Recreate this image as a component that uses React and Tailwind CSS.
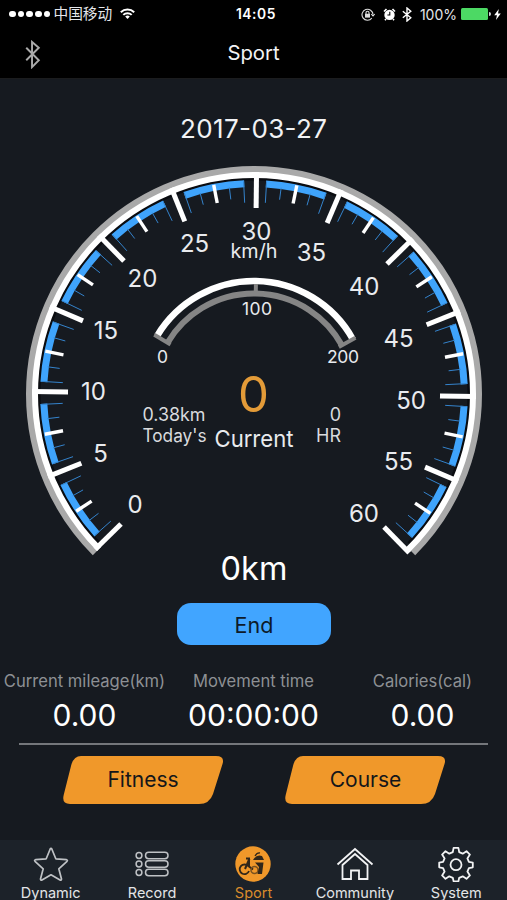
const CX = 254;
const CY = 315;
const TILT = 0.65;

// angle in degrees, clockwise from twelve o'clock
const polar = (r, deg) => {
  const a = ((deg - 90) * Math.PI) / 180;
  return [CX + r * Math.cos(a), CY + r * Math.sin(a)];
};

const arc = (r, from, to) => {
  const [x1, y1] = polar(r, from);
  const [x2, y2] = polar(r, to);
  return `M${x1} ${y1}A${r} ${r} 0 ${to - from > 180 ? 1 : 0} 1 ${x2} ${y2}`;
};

const ray = (r1, r2, deg) => {
  const [x1, y1] = polar(r1, deg);
  const [x2, y2] = polar(r2, deg);
  return `M${x1} ${y1}L${x2} ${y2}`;
};

const speedLabels = [
  { value: '0', x: 135, y: 434 },
  { value: '5', x: 100.5, y: 382.5 },
  { value: '10', x: 93.5, y: 321 },
  { value: '15', x: 106, y: 259.5 },
  { value: '20', x: 142.5, y: 207.5 },
  { value: '25', x: 194.5, y: 173 },
  { value: '30', x: 256.5, y: 161 },
  { value: '35', x: 311.5, y: 181.5 },
  { value: '40', x: 364, y: 216 },
  { value: '45', x: 398.5, y: 268 },
  { value: '50', x: 411, y: 329.5 },
  { value: '55', x: 398.5, y: 391 },
  { value: '60', x: 364, y: 443 },
];

const stats = [
  { label: 'Current mileage(km)', value: '0.00' },
  { label: 'Movement time', value: '00:00:00' },
  { label: 'Calories(cal)', value: '0.00' },
];

function StatusBar() {
  return (
    <div className="flex h-7 items-center justify-between pl-[9px] pr-[6px] text-white">
      <div className="flex w-[160px] items-center">
        <div className="flex gap-[2px]">
          {[0, 1, 2, 3, 4].map((dot) => (
            <span key={dot} className="h-[6.7px] w-[6.7px] rounded-full bg-white" />
          ))}
        </div>
        <span className="ml-[3px] text-[14.7px] leading-none text-gray-200">中国移动</span>
        <svg className="ml-[8px] h-[11px] w-[15px]" viewBox="0 0 15 11" fill="none" stroke="#fff" strokeWidth="2">
          <path d="M.8 4.3a9.6 9.6 0 0 1 13.4 0M3.3 6.9a6 6 0 0 1 8.4 0" />
          <path d="M5.2 8.6a3.3 3.3 0 0 1 4.6 0L7.5 11z" fill="#fff" stroke="none" />
        </svg>
      </div>
      <span className="pl-[2px] text-[13.8px] font-semibold tracking-[0.6px]">14:05</span>
      <div className="flex w-[160px] items-center justify-end">
        <svg className="h-[13px] w-[14px]" viewBox="0 0 14 13" fill="none" stroke="#ddd" strokeWidth="1.1">
          <path d="M10.8 10.2A5.5 5.5 0 1 1 12 6.5M10.2 6l1.8 2 1.7-2" />
          <rect x="4" y="5.8" width="5" height="3.8" fill="#ddd" stroke="none" />
          <path d="M5 6V4.8a1.5 1.5 0 0 1 3 0V6" />
        </svg>
        <svg className="ml-[8px] h-[13px] w-[13px]" viewBox="0 0 13 13">
          <circle cx="6.5" cy="6.9" r="5.2" fill="#fff" />
          <path d="M1 3.5L3.5 1M12 3.5L9.5 1M3 11l-1 1.3M10 11l1 1.3" stroke="#fff" strokeWidth="1.6" />
          <path d="M6.8 3.8V7H4.4" fill="none" stroke="#000" strokeWidth="1.1" />
        </svg>
        <svg className="ml-[6px] h-[15px] w-[10px]" viewBox="0 0 10 15" fill="none" stroke="#fff" strokeWidth="1.4">
          <path d="M.8 4.2l8 6.6L5 14V1l3.8 3.2-8 6.6" />
        </svg>
        <span className="ml-[8px] whitespace-nowrap text-[14px] text-gray-200">100%</span>
        <span className="ml-[4px] h-[12px] w-[27px] shrink-0 rounded-[1.5px] bg-[#4cd964]" />
        <span className="ml-px h-[4px] w-[2px] shrink-0 rounded-r bg-gray-300" />
        <svg className="ml-[3px] h-[11px] w-[7px] shrink-0" viewBox="0 0 6 10" fill="#fff">
          <path d="M4.2 0L0 5.6h2.5L1.6 10 6 4.2H3.5z" />
        </svg>
      </div>
    </div>
  );
}

function Gauge() {
  const majors = Array.from({ length: 13 }, (_, i) => -135 + i * 22.5 + TILT);
  const steps = majors.slice(0, 12);

  return (
    <svg className="block h-[481px] w-[507px]" viewBox="0 0 507 481" fill="none">
      <path d={arc(215, -134, 134)} stroke="#0a0c10" strokeWidth="3" />
      <path d={arc(224.5, -135, 135)} stroke="#a9a9a9" strokeWidth="7" />
      <path d={arc(219, -135, 135.5)} stroke="#fff" strokeWidth="6" />

      {steps.map((deg) => (
        <g key={deg}>
          <path d={arc(210.4, deg + 2.6, deg + 19.2)} stroke="#3fa4fc" strokeWidth="7" />
          <path d={ray(213, 191.5, deg + 2.75)} stroke="#3483cc" strokeWidth="1" />
          <path d={ray(208, 196, deg + 6.85)} stroke="#3483cc" strokeWidth="1" />
          <path d={ray(213, 194.5, deg + 10.95)} stroke="#fff" strokeWidth="3.4" />
          <path d={ray(208, 196, deg + 15.05)} stroke="#3483cc" strokeWidth="1" />
          <path d={ray(213, 191.5, deg + 19.05)} stroke="#3483cc" strokeWidth="1" />
        </g>
      ))}
      {majors.map((deg) => (
        <path key={deg} d={ray(222, 186, deg)} stroke="#fff" strokeWidth="5" />
      ))}

      {/* heart rate scale */}
      <path d={arc(100.5, -59, 61)} stroke="#858585" strokeWidth="6" />
      <path d={arc(113, -59, 61)} stroke="#fff" strokeWidth="6.5" />
      <path d={ray(116, 97, -59.3)} stroke="#858585" strokeWidth="4" />
      <path d={ray(116, 97, 61)} stroke="#858585" strokeWidth="4" />
      <path d={ray(110, 103, 1)} stroke="#858585" strokeWidth="4" />

      <g fill="#e9ebee" textAnchor="middle">
        {speedLabels.map(({ value, x, y }) => (
          <text key={value} x={x} y={y} fontSize="24">{value}</text>
        ))}
        <text x="254" y="179" fontSize="19.5" textLength="47" lengthAdjust="spacingAndGlyphs">km/h</text>
        <text x="257" y="235.5" fontSize="17.5" textLength="30">100</text>
        <text x="162.5" y="284" fontSize="17.5">0</text>
        <text x="343" y="284" fontSize="17.5" textLength="32">200</text>
        <text x="254" y="367.5" fontSize="23.5" textLength="79" lengthAdjust="spacingAndGlyphs">Current</text>
      </g>
      <text x="253.5" y="332.5" fontSize="49" fontWeight="400" fill="#e39b38" textAnchor="middle" textLength="31" lengthAdjust="spacingAndGlyphs">0</text>
      <g fill="#d9dbde" fontSize="18">
        <text x="142.5" y="341.5" textLength="63" lengthAdjust="spacingAndGlyphs">0.38km</text>
        <text x="142.5" y="363" textLength="64" lengthAdjust="spacingAndGlyphs">Today's</text>
        <text x="341" y="341.5" textAnchor="end">0</text>
        <text x="341" y="363" textAnchor="end" textLength="25">HR</text>
      </g>
      <text x="253.5" y="58.5" fontSize="26" fill="#f1f2f4" textAnchor="middle" textLength="147">2017-03-27</text>
    </svg>
  );
}

function SlantButton({ children }) {
  return (
    <button type="button" className="relative flex h-[48px] w-[161px] items-center justify-center text-[21px] text-[#14161a]">
      <svg className="absolute inset-0 h-full w-full" viewBox="0 0 161 48" fill="#f0982a">
        <path d="M18 0H153Q162 0 159.5 8L150 38Q146.5 48 136 48H7Q-1.5 48 .7 39L8 10Q10.5 0 18 0Z" />
      </svg>
      <span className="relative">{children}</span>
    </button>
  );
}

function StarIcon() {
  return (
    <svg className="h-[36px] w-[36px]" viewBox="0 0 36 36" fill="none" stroke="#bfc2c5" strokeWidth="1.7" strokeLinejoin="round">
      <path d="M17.2 3q.8-1.5 1.6 0l4 9.8 10.7.9q1.5.4.5 1.6l-8.2 7.5 2.7 10.200q0 1.6-1.5 1L18 28.8 9 34q-1.5.6-1.5-1l2.7-10.200L2 15.300q-1-1.200.5-1.600l10.700-.9z" />
    </svg>
  );
}

function ListIcon() {
  return (
    <svg className="h-[36px] w-[36px]" viewBox="0 0 36 36" fill="none" stroke="#bfc2c5" strokeWidth="1.5">
      {[9.5, 18, 26.5].map((y) => (
        <g key={y}>
          <circle cx="5" cy={y} r="2.9" />
          <rect x="11.5" y={y - 3.2} width="22.5" height="6.4" rx="3.2" />
        </g>
      ))}
    </svg>
  );
}

function SportIcon() {
  return (
    <svg className="h-[36px] w-[36px]" viewBox="0 0 36 36" fill="none">
      <circle cx="18" cy="18" r="17.7" fill="#f0982a" />
      <path d="M13.2 20.2A4.8 4.8 0 1 0 14 25" stroke="#30261a" strokeWidth="1.8" />
      <path d="M10 23l4.5-10.5M11 12.5h4M14 12.5v8l4 3" stroke="#30261a" strokeWidth="2" />
      <circle cx="19.5" cy="24" r="3.5" stroke="#7a5220" strokeWidth="1.5" />
      <path d="M18 14q3.5-6 9-4l2 4z" fill="#30261a" />
      <path d="M20 10q2-3.5 5-3" stroke="#30261a" strokeWidth="1.3" />
      <path d="M20 16.500h8.500l-1.500 11.500h-4.500l1.500-7z" fill="#30261a" />
    </svg>
  );
}

function HomeIcon() {
  return (
    <svg className="h-[36px] w-[38px]" viewBox="0 0 38 36" fill="none" stroke="#f2f3f4" strokeWidth="1.8">
      <path d="M1.5 18.5L19 3l17.5 15.5" />
      <path d="M6.5 19V33H15V24.5h8V33h8.5V19L19 8z" />
    </svg>
  );
}

function GearIcon() {
  return (
    <svg className="h-[36px] w-[36px]" viewBox="0 0 36 36" fill="none" stroke="#f2f3f4" strokeWidth="1.8" strokeLinejoin="round">
      <path d="M15.6 1.8h4.8l.8 4.4 3.5 1.5 3.8-2.5 3.4 3.4-2.5 3.8 1.5 3.5 3.9.8v4.6l-3.9.8-1.5 3.5 2.5 3.8-3.4 3.4-3.8-2.5-3.5 1.5-.8 3.6h-4.8l-.8-3.6-3.5-1.5-3.8 2.5-3.4-3.4 2.5-3.8-1.5-3.5-3.9-.8v-4.6l3.9-.8 1.5-3.5-2.5-3.8 3.4-3.4 3.8 2.5 3.5-1.5z" />
      <circle cx="18" cy="18.7" r="5.5" />
    </svg>
  );
}

const tabs = [
  { label: 'Dynamic', Icon: StarIcon },
  { label: 'Record', Icon: ListIcon },
  { label: 'Sport', Icon: SportIcon, active: true },
  { label: 'Community', Icon: HomeIcon },
  { label: 'System', Icon: GearIcon },
];

export default function App() {
  return (
    <div className="flex h-[900px] w-[507px] flex-col overflow-hidden bg-[#161a20] font-[Inter,'Noto_Sans_CJK_SC',sans-serif] text-white">
      <header className="h-[79px] shrink-0 border-b border-[#1b1c1e] bg-black">
        <StatusBar />
        <div className="flex h-[50px] items-center justify-between px-[24px]">
          <svg className="mt-[3px] h-[29px] w-[18px]" viewBox="0 0 18 30" fill="none" stroke="#aaa" strokeWidth="2">
            <path d="M2 8l13 13-7 7V2l7 6L2 21" />
          </svg>
          <h1 className="text-[20.3px] leading-none text-gray-100">Sport</h1>
          <span className="w-[18px]" />
        </div>
      </header>

      <main className="flex min-h-0 flex-1 flex-col">
        <Gauge />
        <div className="-mt-[12px] flex flex-col items-center pl-px">
          <p className="text-[32.5px] leading-[42px]">0km</p>
          <button type="button" className="mt-[13px] h-[42px] w-[154px] rounded-[14px] bg-[#41a5ff] pt-[2px] text-[21.5px] text-[#0d1a29]">
            End
          </button>
        </div>

        <div className="mt-[25px] grid grid-cols-3 text-center">
          {stats.map(({ label, value }) => (
            <div key={label}>
              <p className="whitespace-nowrap text-[16.6px] leading-[22px] text-[#8d9094]">{label}</p>
              <p className="mt-[4px] text-[30px] leading-[38px]">{value}</p>
            </div>
          ))}
        </div>

        <div className="mx-[19px] mt-[9px] h-[2px] shrink-0 bg-[#74777b]" />
        <div className="mt-[11px] flex justify-between pl-[62.5px] pr-[61px]">
          <SlantButton>Fitness</SlantButton>
          <SlantButton>Course</SlantButton>
        </div>
      </main>

      <nav className="grid h-[60px] shrink-0 grid-cols-5 bg-[#1c2229]">
        {tabs.map(({ label, Icon, active }) => (
          <a key={label} className={`flex flex-col items-center pt-[6px] text-[14.5px] leading-[21px] ${active ? 'text-[#d98b2c]' : 'text-[#e3e5e7]'}`}>
            <Icon />
            {label}
          </a>
        ))}
      </nav>
    </div>
  );
}
